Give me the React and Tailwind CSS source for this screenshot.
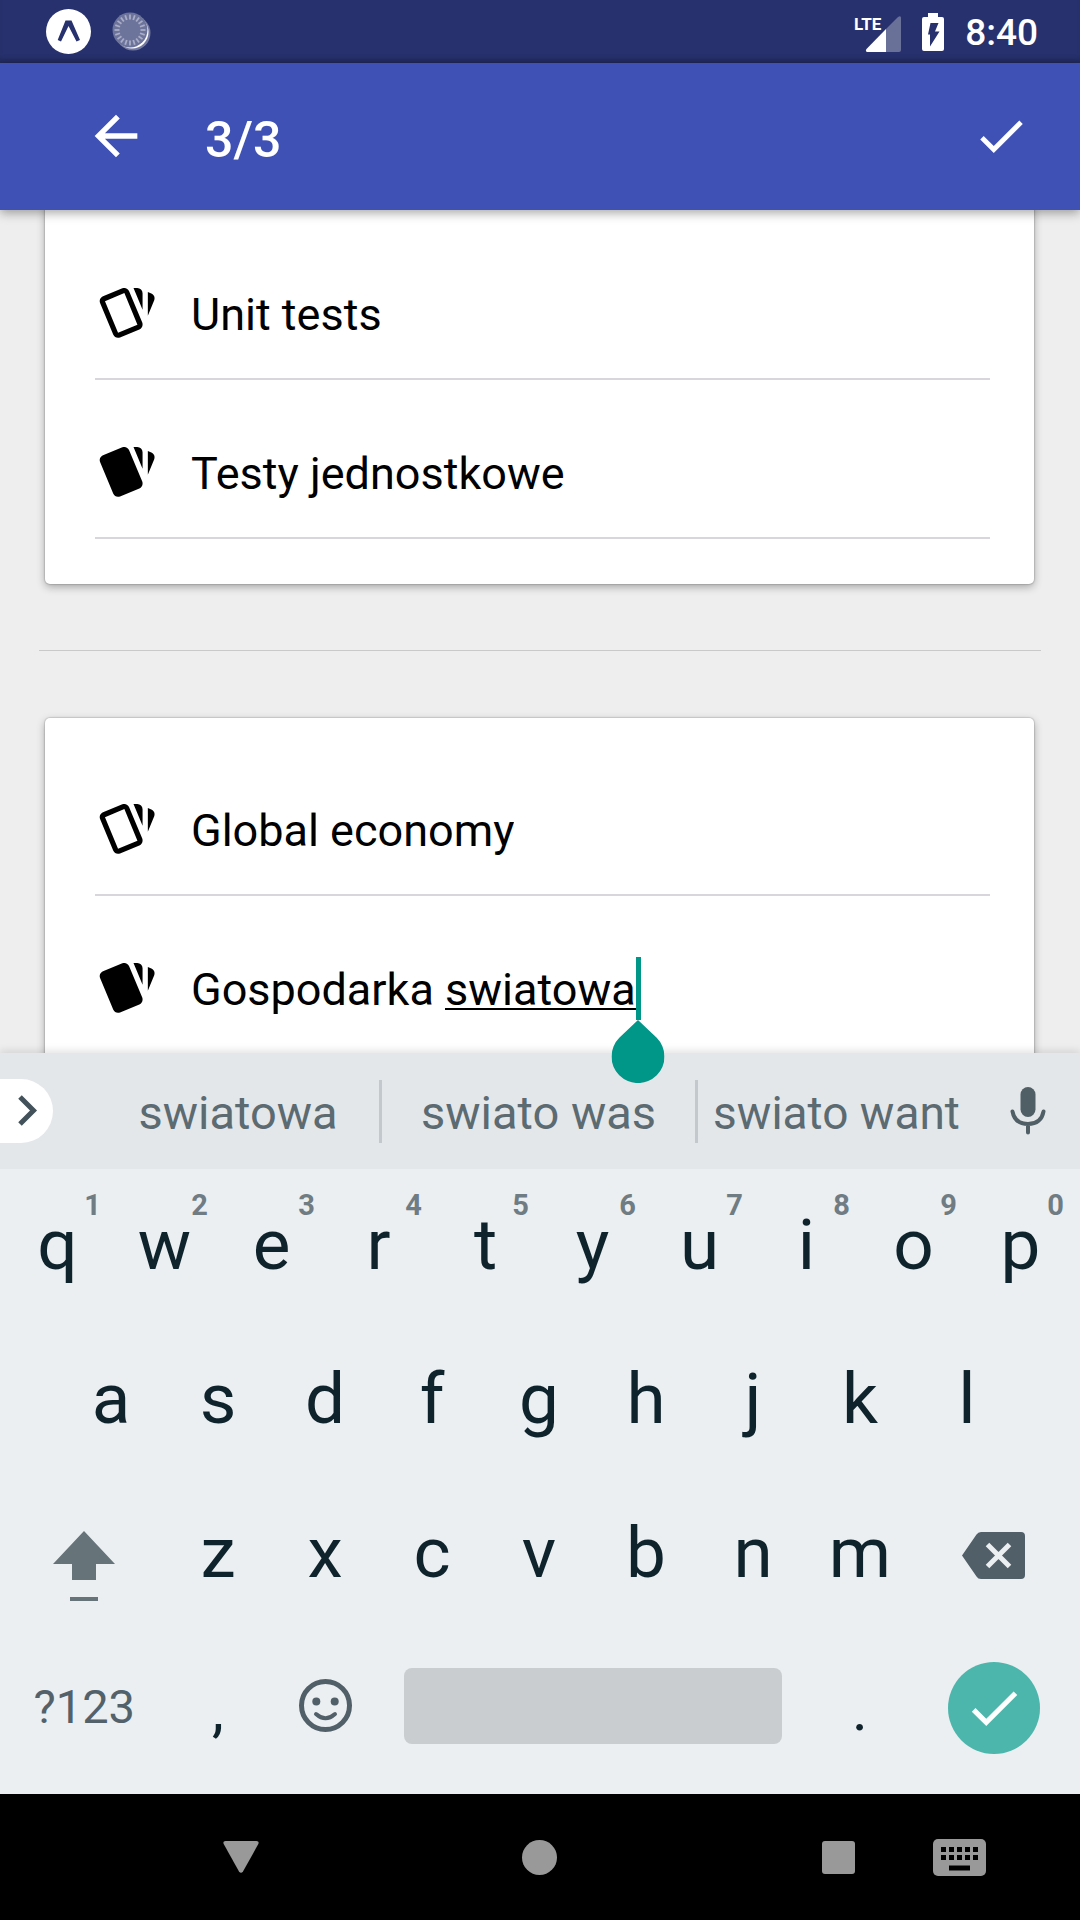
import React from "react";

const CARDS_FILLED =
  "M21.47,4.35L20.13,3.79V12.82L22.56,6.96C22.97,5.94 22.5,4.77 21.47,4.35M1.97,8.05L6.93,20C7.24,20.77 7.97,21.24 8.74,21.26C9,21.26 9.27,21.21 9.53,21.1L16.9,18.05C17.65,17.74 18.11,17 18.13,16.26C18.14,16 18.09,15.71 18,15.45L13,3.5C12.71,2.73 11.97,2.26 11.19,2.25C10.93,2.25 10.67,2.31 10.42,2.4L3.06,5.45C2.04,5.87 1.55,7.04 1.97,8.05M18.12,4.25A2,2 0 0,0 16.12,2.25H14.67L18.12,10.59";
const CARDS_OUTLINE =
  "M11.19,2.25C10.93,2.25 10.67,2.31 10.42,2.4L3.06,5.45C2.04,5.87 1.55,7.04 1.97,8.05L6.93,20C7.24,20.77 7.97,21.23 8.74,21.25C9,21.25 9.27,21.22 9.53,21.1L16.9,18.05C17.65,17.74 18.11,17 18.13,16.25C18.14,16 18.09,15.71 18,15.45L13,3.5C12.71,2.73 11.97,2.26 11.19,2.25M14.67,2.25L18.12,10.6V4.25A2,2 0 0,0 16.12,2.25M20.13,3.79V12.82L22.56,6.96C22.97,5.94 22.5,4.78 21.46,4.36M11.19,4.22L16.17,16.24L8.78,19.3L3.8,7.29";
const CHECK = "M9 16.17 4.83 12l-1.42 1.41L9 19 21 7l-1.41-1.41z";

function StatusBar() {
  const ticks = Array.from({ length: 20 }, (_, i) => i * 18);
  return (
    <div className="flex h-[63px] shrink-0 items-center justify-between bg-[#27316d] pr-[42px] pl-[46px] shadow-[inset_0_-6px_6px_-4px_rgba(0,0,0,0.25)]">
      <div className="flex items-center gap-[21px]">
        <svg width="45" height="45" viewBox="0 0 45 45" aria-hidden="true">
          <circle cx="22.5" cy="22.5" r="22.5" fill="#fff" />
          <path d="M19.5 11.5h6L34 31l-3.500 1.500L22.500 17 15 32.500 11.700 31z" fill="#27316d" />
        </svg>
        <svg width="39" height="39" viewBox="0 0 39 39" aria-hidden="true">
          <circle cx="21" cy="21" r="17.500" fill="#fff" fillOpacity="0.35" />
          <circle cx="20" cy="20" r="16.500" fill="#fff" />
          <circle cx="18" cy="18" r="17.500" fill="#6d749c" />
          {ticks.map((angle) => (
            <path key={angle} d="M18 2.500v5" stroke="#a9adc6" strokeWidth="1.800" transform={`rotate(${angle} 18 18)`} />
          ))}
        </svg>
      </div>
      <div className="flex items-center gap-[21px]">
        <svg width="48" height="40" viewBox="0 0 48 40" aria-label="LTE signal">
          <path d="M45 5q3-2 3 1v32q0 2-2 2H33V17z" fill="#6a7199" />
          <path d="M33 17v23H14q-2-1-.5-3z" fill="#fff" />
          <text x="1" y="18" fill="#fff" fontSize="17" fontWeight="700" fontFamily="Roboto, sans-serif">
            LTE
          </text>
        </svg>
        <svg width="22" height="38" viewBox="0 0 22 38" aria-label="Battery charging">
          <path d="M6 0h10v4h4q2 0 2 2v30q0 2-2 2H2q-2 0-2-2V6q0-2 2-2h4z" fill="#fff" />
          <path d="M8.500 10h8l-3.500 8.500h4.500L8 33.500V21.500H6z" fill="#27316d" />
        </svg>
        <span className="pt-[2px] text-[37px] leading-[44px] font-medium text-white">8:40</span>
      </div>
    </div>
  );
}

function Header() {
  return (
    <header className="z-10 flex h-[147px] shrink-0 items-center bg-[#3f51b5] pr-[50px] pb-[2px] pl-[84px] shadow-[0_3px_10px_rgba(0,0,0,0.35)]">
      <button type="button" aria-label="Back" className="text-white">
        <svg width="64" height="64" viewBox="0 0 24 24" fill="currentColor">
          <path d="M20 11H7.830l5.590-5.590L12 4l-8 8 8 8 1.410-1.410L7.830 13H20v-2z" />
        </svg>
      </button>
      <h1 className="ml-[57px] grow pt-2 text-[50px] leading-[60px] font-medium text-white">3/3</h1>
      <button type="button" aria-label="Save" className="text-white">
        <svg width="58" height="58" viewBox="0 0 24 24" fill="currentColor">
          <path d={CHECK} />
        </svg>
      </button>
    </header>
  );
}

function Field({ label, icon, value, active }) {
  return (
    <label className="mt-7 flex h-[131px] items-center border-b-2 border-[#d9d5dc]">
      <svg width="63" height="63" viewBox="0 0 24 24" className="shrink-0" aria-hidden="true">
        <path d={icon} fillRule="evenodd" />
      </svg>
      <span className="relative ml-[33px] flex h-[63px] items-center">
        <input
          type="text"
          aria-label={label}
          defaultValue={value}
          className="field-sizing-content h-[63px] bg-transparent pt-[3px] text-[45px] text-black outline-none"
        />
        {active && (
          <>
            <span className="absolute right-0 bottom-[10px] h-[2px] w-[191px] bg-black" />
            <span className="absolute inset-y-0 left-full z-20 w-[5px] bg-[#009688]">
              <svg width="53" height="63" viewBox="0 0 53 63" className="absolute top-full left-1/2 max-w-none -translate-x-1/2">
                <path d="M26.500 0L45.200 17.800A26.500 26.500 0 1 1 7.800 17.800z" fill="#009688" />
              </svg>
            </span>
          </>
        )}
      </span>
    </label>
  );
}

function FlashCard({ front, back, active }) {
  return (
    <section className="mr-[46px] ml-[45px] rounded-[5px] bg-white pt-[19px] pr-11 pb-[45px] pl-[50px] shadow-[0_0_1px_1px_rgba(0,0,0,0.12),0_3px_8px_rgba(0,0,0,0.3)]">
      <Field label="Front" icon={CARDS_OUTLINE} value={front} />
      <Field label="Back" icon={CARDS_FILLED} value={back} active={active} />
    </section>
  );
}

function Key({ char, hint, first }) {
  return (
    <button
      type="button"
      className={
        "relative col-span-2 flex items-center justify-center pb-[2px] text-[71px] leading-[84px] text-[#0f232c] " +
        (first ? "col-start-2" : "")
      }
    >
      {char}
      {hint && <span className="absolute top-[19px] right-[10px] text-[29px] leading-[34px] font-bold text-[#6f7c83]">{hint}</span>}
    </button>
  );
}

function PunctuationKey({ char }) {
  return (
    <button type="button" className="col-span-2 flex items-center justify-center pt-1 text-[60px] leading-[72px] text-[#0f232c]">
      {char}
    </button>
  );
}

function Suggestion({ children, last }) {
  return (
    <button
      type="button"
      className={
        "h-[63px] pt-[3px] leading-[56px] whitespace-nowrap text-[#5c6a71] " +
        (last ? "text-[46px]" : "border-r-[3px] border-[#c2c8cb] text-[47px]")
      }
    >
      {children}
    </button>
  );
}

function Keyboard() {
  return (
    <div className="z-10 shrink-0 bg-[#ebeff2] shadow-[0_-2px_8px_rgba(0,0,0,0.12)]">
      <div className="flex h-[116px] items-center bg-[#e3e7ea]">
        <div className="w-[97px] shrink-0">
          <button type="button" aria-label="More" className="flex h-16 w-[53px] items-center justify-center rounded-r-full bg-white">
            <svg width="53" height="64" viewBox="0 0 53 64">
              <path d="M20 18l13.500 13.500L20 45" fill="none" stroke="#43525a" strokeWidth="5" />
            </svg>
          </button>
        </div>
        <div className="grid grow grid-cols-[285fr_316fr_277fr]">
          <Suggestion>swiatowa</Suggestion>
          <Suggestion>swiato was</Suggestion>
          <Suggestion last>swiato want</Suggestion>
        </div>
        <button type="button" aria-label="Voice input" className="flex w-[105px] shrink-0 justify-center">
          <svg width="36" height="48" viewBox="0 0 36 48" fill="none" stroke="#505f66" strokeWidth="4" strokeLinecap="round">
            <rect x="10.500" y="0" width="15" height="30" rx="7.500" fill="#505f66" stroke="none" />
            <path d="M2.500 24.500C4 33 10 37 18 37s14-4 15.500-12.500M18 37v8.500" />
          </svg>
        </button>
      </div>
      <div className="grid auto-rows-[154px] grid-cols-20 pr-[6px] pb-[9px] pl-1">
        {[..."qwertyuiop"].map((c, i) => (
          <Key key={c} char={c} hint={String((i + 1) % 10)} />
        ))}
        {[..."asdfghjkl"].map((c, i) => (
          <Key key={c} char={c} first={i === 0} />
        ))}
        <button type="button" aria-label="Shift" className="col-span-3 col-start-1 flex items-center justify-center">
          <svg width="62" height="94" viewBox="0 0 62 94" fill="#667379">
            <path d="M31 24L62 57H43V73H19V57H0z" />
            <path d="M17 90h28v4H17z" />
          </svg>
        </button>
        {[..."zxcvbnm"].map((c) => (
          <Key key={c} char={c} />
        ))}
        <button type="button" aria-label="Backspace" className="col-span-3 flex items-center justify-center pt-[2px]">
          <svg width="63" height="47" viewBox="0 0 63 47">
            <path d="M0 23.500L14.500 2.500Q16 0 19 0H59q4 0 4 4V43q0 4-4 4H19q-3 0-4.500-2.500z" fill="#505f68" />
            <path d="M25.500 12.500l22 22m0-22l-22 22" stroke="#ebeff2" strokeWidth="5" />
          </svg>
        </button>
        <button type="button" className="col-span-3 pb-[2px] text-[47px] leading-[56px] text-[#53626a]">
          ?123
        </button>
        <PunctuationKey char="," />
        <button type="button" aria-label="Emoji" className="col-span-2 flex items-center justify-center pb-[6px]">
          <svg width="53" height="53" viewBox="0 0 53 53">
            <circle cx="26.500" cy="26.500" r="24" fill="none" stroke="#505f68" strokeWidth="5" />
            <circle cx="17.300" cy="22.500" r="4" fill="#505f68" />
            <circle cx="35.700" cy="22.500" r="4" fill="#505f68" />
            <path d="M17 35Q26.500 43.500 36 35" fill="none" stroke="#505f68" strokeWidth="4" strokeLinecap="round" />
          </svg>
        </button>
        <button type="button" aria-label="Space" className="col-span-8 mx-[25px] mb-1 h-[76px] self-center rounded-lg bg-[#c9cdd0]" />
        <PunctuationKey char="." />
        <button type="button" aria-label="Done" className="col-span-3 flex items-center justify-center">
          <span className="flex size-[92px] items-center justify-center rounded-full bg-[#4db6ac] text-white">
            <svg width="62" height="62" viewBox="0 0 24 24" fill="currentColor">
              <path d={CHECK} />
            </svg>
          </span>
        </button>
      </div>
    </div>
  );
}

function NavBar() {
  return (
    <nav className="z-10 grid h-[126px] shrink-0 grid-cols-[151fr_179fr_120fr_179fr_120fr_179fr_63fr_89fr] bg-black">
      <button type="button" aria-label="Back" className="col-start-2 flex items-center justify-center">
        <svg width="36" height="32" viewBox="0 0 36 32" fill="#999">
          <path d="M2.500 0H33.500q3 0 1.800 3L20 30.500q-2 2.500-4 0L.7 3Q-.5 0 2.500 0z" />
        </svg>
      </button>
      <button type="button" aria-label="Home" className="col-start-4 flex items-center justify-center">
        <span className="size-[35px] rounded-full bg-[#999]" />
      </button>
      <button type="button" aria-label="Recent apps" className="col-start-6 flex items-center justify-center">
        <span className="size-[33px] rounded-[3px] bg-[#999]" />
      </button>
      <button type="button" aria-label="Switch keyboard" className="col-start-7 flex items-center justify-center">
        <svg width="53" height="37" viewBox="0 0 53 37">
          <rect width="53" height="37" rx="5" fill="#999" />
          {[8, 16, 24, 32, 40].map((x) => (
            <path key={x} d={`M${x} 8h5v5h-5zM${x} 16h5v5h-5z`} />
          ))}
          <path d="M16 26.500h21v5H16z" />
        </svg>
      </button>
    </nav>
  );
}

export default function App() {
  return (
    <div className="flex h-screen flex-col overflow-hidden bg-[#eee] font-[Roboto,sans-serif]">
      <StatusBar />
      <Header />
      <main className="-mt-2 min-h-0 flex-1">
        <FlashCard front="Unit tests" back="Testy jednostkowe" />
        <hr className="mx-[39px] mt-[66px] mb-[67px] border-t border-[#c9c9c9]" />
        <FlashCard front="Global economy" back="Gospodarka swiatowa" active />
      </main>
      <Keyboard />
      <NavBar />
    </div>
  );
}
